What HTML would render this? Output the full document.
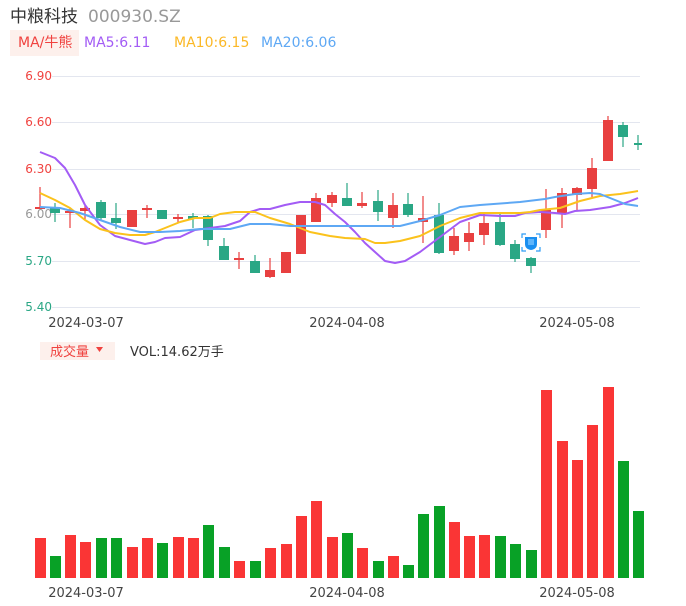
<!DOCTYPE html>
<html><head><meta charset="utf-8"><style>
html,body{margin:0;padding:0;background:#fff;width:686px;height:606px;overflow:hidden}
body{font-family:"DejaVu Sans","Noto Sans CJK SC",sans-serif}
svg text{font-family:"DejaVu Sans","Noto Sans CJK SC",sans-serif}
</style></head><body>
<svg width="686" height="606" xmlns="http://www.w3.org/2000/svg" style="position:absolute;left:0;top:0">
<text x="10" y="22" font-size="17" fill="#333">中粮科技</text>
<text x="88" y="22" font-size="17" fill="#999">000930.SZ</text>
<rect x="10" y="30" width="69" height="26" fill="#fdf0ec"/>
<text x="18" y="47" font-size="14" fill="#f0423f">MA/牛熊</text>
<text x="84" y="47" font-size="14" fill="#a35cf5">MA5:6.11</text>
<text x="174" y="47" font-size="14" fill="#fbb826">MA10:6.15</text>
<text x="261" y="47" font-size="14" fill="#5ea8f4">MA20:6.06</text>
<g stroke="#e3e6ef" stroke-width="1">
<line x1="52" y1="76.5" x2="640" y2="76.5"/><line x1="52" y1="122.5" x2="640" y2="122.5"/><line x1="52" y1="169.5" x2="640" y2="169.5"/><line x1="52" y1="214.5" x2="640" y2="214.5"/><line x1="52" y1="261.5" x2="640" y2="261.5"/><line x1="52" y1="307.5" x2="640" y2="307.5"/>
</g>
<g font-size="12" text-anchor="end">
<text x="52" y="80" fill="#f0423f">6.90</text><text x="52" y="126" fill="#f0423f">6.60</text><text x="52" y="173" fill="#f0423f">6.30</text><text x="52" y="218" fill="#999">6.00</text><text x="52" y="265" fill="#2aa785">5.70</text><text x="52" y="311" fill="#2aa785">5.40</text>
</g>
<g font-size="13" fill="#444" text-anchor="middle">
<text x="86" y="327">2024-03-07</text><text x="347" y="327">2024-04-08</text><text x="577" y="327">2024-05-08</text>
<text x="86" y="597">2024-03-07</text><text x="347" y="597">2024-04-08</text><text x="577" y="597">2024-05-08</text>
</g>
<g stroke-width="1.2">
<line x1="40" y1="187" x2="40" y2="209" stroke="#e84040"/><rect x="35" y="207" width="10" height="2" fill="#e84040"/>
<line x1="55" y1="203" x2="55" y2="222" stroke="#2aa785"/><rect x="50" y="207" width="10" height="6" fill="#2aa785"/>
<line x1="70" y1="208" x2="70" y2="228" stroke="#e84040"/><rect x="65" y="211" width="10" height="2" fill="#e84040"/>
<line x1="85" y1="206" x2="85" y2="219" stroke="#e84040"/><rect x="80" y="208" width="10" height="3" fill="#e84040"/>
<line x1="101" y1="200" x2="101" y2="220" stroke="#2aa785"/><rect x="96" y="202" width="10" height="16" fill="#2aa785"/>
<line x1="116" y1="203" x2="116" y2="229" stroke="#2aa785"/><rect x="111" y="218" width="10" height="5" fill="#2aa785"/>
<rect x="127" y="210" width="10" height="17" fill="#e84040"/>
<line x1="147" y1="205" x2="147" y2="218" stroke="#e84040"/><rect x="142" y="208" width="10" height="2" fill="#e84040"/>
<rect x="157" y="210" width="10" height="9" fill="#2aa785"/>
<line x1="178" y1="214" x2="178" y2="223" stroke="#e84040"/><rect x="173" y="217" width="10" height="2" fill="#e84040"/>
<line x1="193" y1="213" x2="193" y2="228" stroke="#2aa785"/><rect x="188" y="216" width="10" height="3" fill="#2aa785"/>
<line x1="208" y1="215" x2="208" y2="246" stroke="#2aa785"/><rect x="203" y="216" width="10" height="24" fill="#2aa785"/>
<line x1="224" y1="238" x2="224" y2="260" stroke="#2aa785"/><rect x="219" y="246" width="10" height="14" fill="#2aa785"/>
<line x1="239" y1="252" x2="239" y2="269" stroke="#e84040"/><rect x="234" y="258" width="10" height="2" fill="#e84040"/>
<line x1="255" y1="255" x2="255" y2="273" stroke="#2aa785"/><rect x="250" y="261" width="10" height="12" fill="#2aa785"/>
<line x1="270" y1="258" x2="270" y2="278" stroke="#e84040"/><rect x="265" y="270" width="10" height="7" fill="#e84040"/>
<rect x="281" y="252" width="10" height="21" fill="#e84040"/>
<rect x="296" y="215" width="10" height="39" fill="#e84040"/>
<line x1="316" y1="193" x2="316" y2="222" stroke="#e84040"/><rect x="311" y="198" width="10" height="24" fill="#e84040"/>
<line x1="332" y1="192" x2="332" y2="207" stroke="#e84040"/><rect x="327" y="195" width="10" height="8" fill="#e84040"/>
<line x1="347" y1="183" x2="347" y2="206" stroke="#2aa785"/><rect x="342" y="198" width="10" height="8" fill="#2aa785"/>
<line x1="362" y1="192" x2="362" y2="208" stroke="#e84040"/><rect x="357" y="203" width="10" height="3" fill="#e84040"/>
<line x1="378" y1="190" x2="378" y2="221" stroke="#2aa785"/><rect x="373" y="201" width="10" height="11" fill="#2aa785"/>
<line x1="393" y1="193" x2="393" y2="228" stroke="#e84040"/><rect x="388" y="205" width="10" height="13" fill="#e84040"/>
<line x1="408" y1="193" x2="408" y2="217" stroke="#2aa785"/><rect x="403" y="204" width="10" height="11" fill="#2aa785"/>
<line x1="423" y1="196" x2="423" y2="243" stroke="#e84040"/><rect x="418" y="218" width="10" height="4" fill="#e84040"/>
<line x1="439" y1="203" x2="439" y2="254" stroke="#2aa785"/><rect x="434" y="215" width="10" height="38" fill="#2aa785"/>
<line x1="454" y1="228" x2="454" y2="255" stroke="#e84040"/><rect x="449" y="236" width="10" height="15" fill="#e84040"/>
<line x1="469" y1="222" x2="469" y2="251" stroke="#e84040"/><rect x="464" y="233" width="10" height="9" fill="#e84040"/>
<line x1="484" y1="212" x2="484" y2="245" stroke="#e84040"/><rect x="479" y="223" width="10" height="12" fill="#e84040"/>
<line x1="500" y1="212" x2="500" y2="246" stroke="#2aa785"/><rect x="495" y="222" width="10" height="23" fill="#2aa785"/>
<line x1="515" y1="240" x2="515" y2="262" stroke="#2aa785"/><rect x="510" y="244" width="10" height="15" fill="#2aa785"/>
<line x1="531" y1="257" x2="531" y2="273" stroke="#2aa785"/><rect x="526" y="258" width="10" height="8" fill="#2aa785"/>
<line x1="546" y1="189" x2="546" y2="238" stroke="#e84040"/><rect x="541" y="210" width="10" height="20" fill="#e84040"/>
<line x1="562" y1="188" x2="562" y2="228" stroke="#e84040"/><rect x="557" y="193" width="10" height="21" fill="#e84040"/>
<line x1="577" y1="187" x2="577" y2="210" stroke="#e84040"/><rect x="572" y="188" width="10" height="7" fill="#e84040"/>
<line x1="592" y1="158" x2="592" y2="197" stroke="#e84040"/><rect x="587" y="168" width="10" height="21" fill="#e84040"/>
<line x1="608" y1="116" x2="608" y2="161" stroke="#e84040"/><rect x="603" y="120" width="10" height="41" fill="#e84040"/>
<line x1="623" y1="122" x2="623" y2="147" stroke="#2aa785"/><rect x="618" y="125" width="10" height="12" fill="#2aa785"/>
<line x1="638" y1="135" x2="638" y2="150" stroke="#2aa785"/><rect x="634" y="143" width="8" height="2" fill="#2aa785"/>
</g>
<g fill="none" stroke-width="2" stroke-linejoin="round">
<polyline stroke="#a35cf5" points="40,152 55,158 65,168 75,185 85,205 100,225 115,236 130,240 145,244 155,242 165,238 180,237 195,230 210,228 225,226 240,221 250,212 260,209 270,209 285,205 300,202 315,202 325,205 335,214 345,222 355,232 365,243 375,252 385,261 395,263 405,261 420,252 440,237 460,222 480,215 500,216 515,216 525,213 540,212 555,213 565,214 575,211 590,210 610,207 625,203 638,198"/>
<polyline stroke="#fbc21c" points="40,193 55,200 70,208 85,220 100,229 115,233 130,235 145,235 155,232 165,228 180,222 195,218 210,218 220,214 235,212 255,212 270,218 290,224 310,232 330,236 345,238 365,239 375,243 385,243 400,241 420,236 440,226 460,218 480,213 500,213 520,213 530,212 540,210 560,208 580,201 600,196 620,194 638,191"/>
<polyline stroke="#5ea8f4" points="40,207 60,208 80,213 100,220 120,227 140,232 160,232 180,231 200,229 230,229 250,224 270,224 290,226 340,226 390,226 400,226 420,221 440,215 460,207 480,205 520,202 545,199 555,197 575,194 590,193 600,194 610,198 625,204 638,206"/>
</g>
<g>
<path d="M522,238 v-4 h4 M536,234 h4 v4 M540,247 v4 h-4 M526,251 h-4 v-4" stroke="#2d9cf5" stroke-width="1.2" fill="none"/>
<path d="M525,237 h12 v7 q0,5 -6,6 q-6,-1 -6,-6 z" fill="#1a8ff0"/>
<rect x="528" y="239" width="6" height="6" fill="#7cc4ff" opacity="0.7"/>
</g>
<rect x="40" y="342" width="75" height="18" fill="#fdf0ec"/>
<text x="50" y="356" font-size="13" fill="#f0423f">成交量</text>
<path d="M96,347 h7 l-3.5,5 z" fill="#f0423f"/>
<text x="130" y="356" font-size="13" fill="#333">VOL:14.62万手</text>
<g>
<rect x="35" y="538" width="11" height="40" fill="#fa3535"/>
<rect x="50" y="556" width="11" height="22" fill="#08a126"/>
<rect x="65" y="535" width="11" height="43" fill="#fa3535"/>
<rect x="80" y="542" width="11" height="36" fill="#fa3535"/>
<rect x="96" y="538" width="11" height="40" fill="#08a126"/>
<rect x="111" y="538" width="11" height="40" fill="#08a126"/>
<rect x="127" y="547" width="11" height="31" fill="#fa3535"/>
<rect x="142" y="538" width="11" height="40" fill="#fa3535"/>
<rect x="157" y="543" width="11" height="35" fill="#08a126"/>
<rect x="173" y="537" width="11" height="41" fill="#fa3535"/>
<rect x="188" y="538" width="11" height="40" fill="#fa3535"/>
<rect x="203" y="525" width="11" height="53" fill="#08a126"/>
<rect x="219" y="547" width="11" height="31" fill="#08a126"/>
<rect x="234" y="561" width="11" height="17" fill="#fa3535"/>
<rect x="250" y="561" width="11" height="17" fill="#08a126"/>
<rect x="265" y="548" width="11" height="30" fill="#fa3535"/>
<rect x="281" y="544" width="11" height="34" fill="#fa3535"/>
<rect x="296" y="516" width="11" height="62" fill="#fa3535"/>
<rect x="311" y="501" width="11" height="77" fill="#fa3535"/>
<rect x="327" y="537" width="11" height="41" fill="#fa3535"/>
<rect x="342" y="533" width="11" height="45" fill="#08a126"/>
<rect x="357" y="548" width="11" height="30" fill="#fa3535"/>
<rect x="373" y="561" width="11" height="17" fill="#08a126"/>
<rect x="388" y="556" width="11" height="22" fill="#fa3535"/>
<rect x="403" y="565" width="11" height="13" fill="#08a126"/>
<rect x="418" y="514" width="11" height="64" fill="#08a126"/>
<rect x="434" y="506" width="11" height="72" fill="#08a126"/>
<rect x="449" y="522" width="11" height="56" fill="#fa3535"/>
<rect x="464" y="536" width="11" height="42" fill="#fa3535"/>
<rect x="479" y="535" width="11" height="43" fill="#fa3535"/>
<rect x="495" y="536" width="11" height="42" fill="#08a126"/>
<rect x="510" y="544" width="11" height="34" fill="#08a126"/>
<rect x="526" y="550" width="11" height="28" fill="#08a126"/>
<rect x="541" y="390" width="11" height="188" fill="#fa3535"/>
<rect x="557" y="441" width="11" height="137" fill="#fa3535"/>
<rect x="572" y="460" width="11" height="118" fill="#fa3535"/>
<rect x="587" y="425" width="11" height="153" fill="#fa3535"/>
<rect x="603" y="387" width="11" height="191" fill="#fa3535"/>
<rect x="618" y="461" width="11" height="117" fill="#08a126"/>
<rect x="633" y="511" width="11" height="67" fill="#08a126"/>
</g>
</svg>
</body></html>
